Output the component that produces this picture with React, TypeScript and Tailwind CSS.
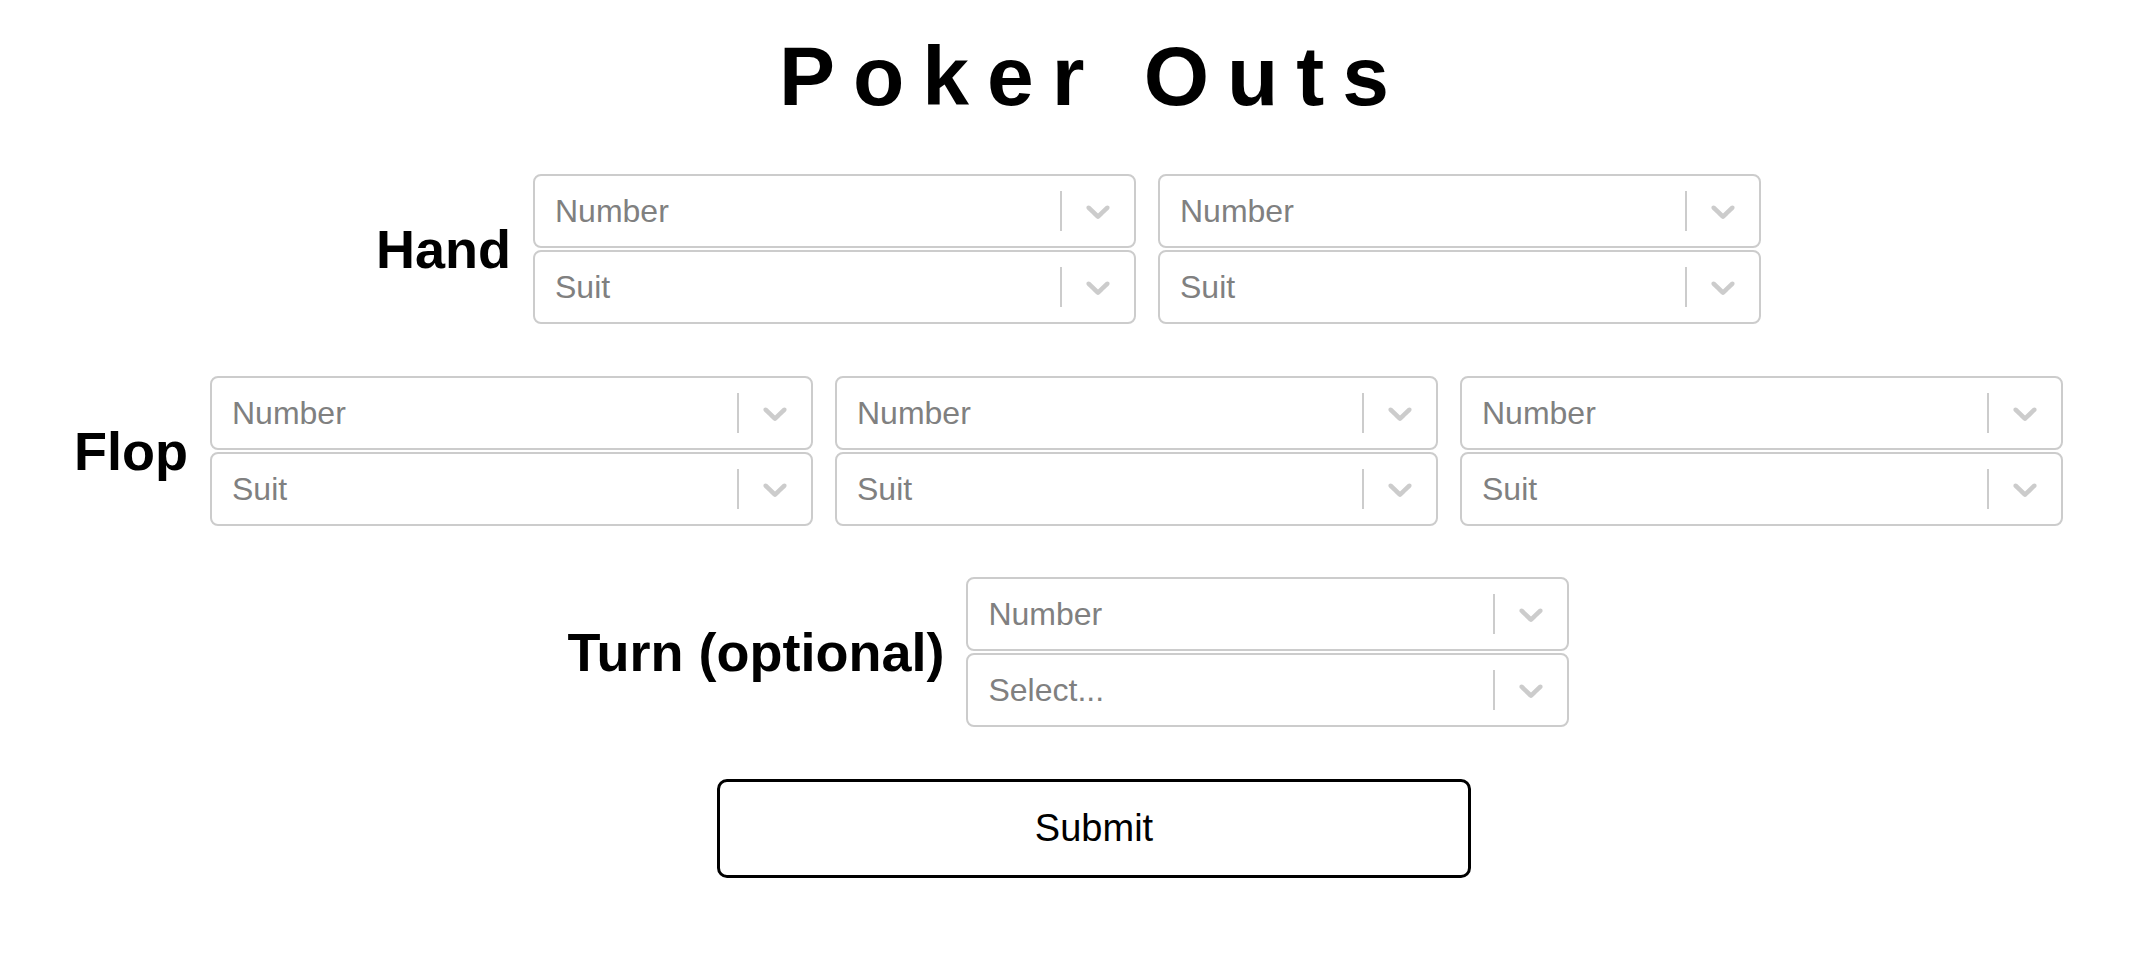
import React from 'react';

const Chevron: React.FC = () => (
  <svg width="40" height="40" viewBox="0 0 20 20" aria-hidden="true" className="fill-[#cccccc]">
    <path d="M4.516 7.548c0.436-0.446 1.043-0.481 1.576 0l3.908 3.747 3.908-3.747c0.533-0.481 1.141-0.446 1.574 0 0.436 0.445 0.408 1.197 0 1.615-0.406 0.418-4.695 4.502-4.695 4.502-0.217 0.223-0.502 0.335-0.787 0.335s-0.57-0.112-0.789-0.335c0 0-4.287-4.084-4.695-4.502s-0.436-1.17 0-1.615z" />
  </svg>
);

const SelectBox: React.FC<{ placeholder: string }> = ({ placeholder }) => (
  <div className="h-[74px] w-[603px] flex items-stretch border-2 border-[#cccccc] rounded-[8px] bg-white">
    <div className="flex-1 flex items-center px-[16px]">
      <span className="ml-[4px] text-[32px] leading-none text-[#808080]">{placeholder}</span>
    </div>
    <div className="flex items-center">
      <span className="w-[2px] h-[40px] bg-[#cccccc]" />
      <div className="px-[16px] flex items-center">
        <Chevron />
      </div>
    </div>
  </div>
);

const Card: React.FC<{ suitLabel?: string }> = ({ suitLabel = 'Suit' }) => (
  <div className="flex flex-col gap-[2px]">
    <SelectBox placeholder="Number" />
    <SelectBox placeholder={suitLabel} />
  </div>
);

const Row: React.FC<{ label: string; children: React.ReactNode; className?: string }> = ({ label, children, className }) => (
  <div className={`flex items-center gap-[22px] mr-[13px] ${className ?? ''}`}>
    <h2 className="text-[54px] leading-none font-bold text-black">{label}</h2>
    <div className="flex gap-[22px]">{children}</div>
  </div>
);

export default function App() {
  return (
    <div className="min-h-screen bg-white flex flex-col items-center font-['Liberation_Sans',Arial,sans-serif] text-black">
      <h1 className="mt-[34px] pl-[36px] text-[84px] leading-none font-bold tracking-[18px]">Poker Outs</h1>

      <Row label="Hand" className="mt-[56px]">
        <Card />
        <Card />
      </Row>

      <Row label="Flop" className="mt-[52px]">
        <Card />
        <Card />
        <Card />
      </Row>

      <Row label="Turn (optional)" className="mt-[51px]">
        <Card suitLabel="Select..." />
      </Row>

      <button className="mt-[52px] ml-[38px] w-[754px] h-[99px] border-[3px] border-black rounded-[10px] bg-white text-[38px] text-black">
        Submit
      </button>
    </div>
  );
}
